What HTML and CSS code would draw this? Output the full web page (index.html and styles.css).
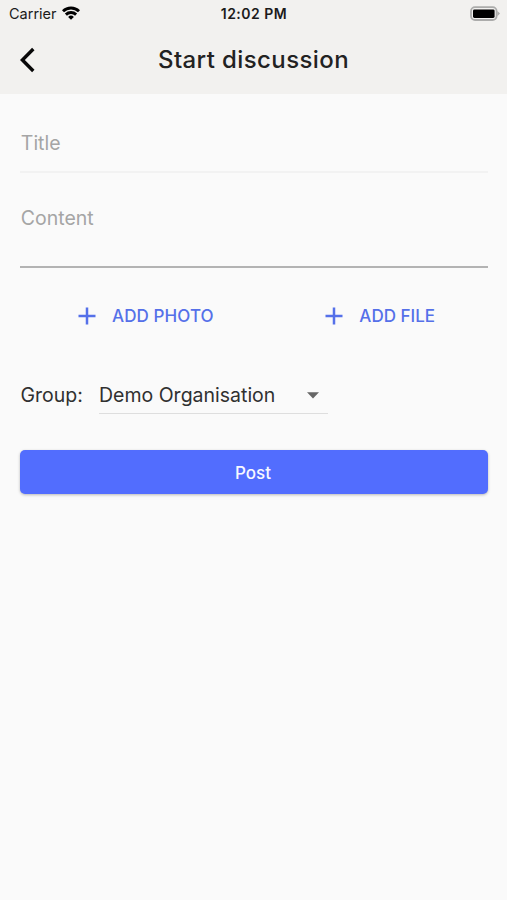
FILE: index.html
```html
<!DOCTYPE html>
<html lang="en">
<head>
<meta charset="utf-8">
<title>Start discussion</title>
<link rel="stylesheet" href="styles.css">
</head>
<body>
<header class="header">
  <div class="status">
    <div class="carrier"><span>Carrier</span>
      <svg class="wifi" width="18" height="14" viewBox="0 0 18 14"><path d="M9 13.7 6.1 10.9a4.1 4.1 0 0 1 5.8 0z"/><path class="arc" d="M1 5.2a11.5 11.5 0 0 1 16 0M3.9 8.6a7.3 7.3 0 0 1 10.2 0"/></svg>
    </div>
    <div class="time">12:02 PM</div>
    <svg class="battery" width="32" height="16" viewBox="0 0 32 16"><rect class="shell" x="2" y="1.2" width="25.6" height="12.8" rx="4"/><rect x="4" y="3.4" width="21.6" height="8.6" rx="1.4"/><path class="cap" d="M28.4 5 31 7.6 28.4 10.2z"/></svg>
  </div>
  <div class="navbar">
    <svg class="back" width="18" height="26" viewBox="0 0 18 26"><path d="M14.3 2 3.4 13l10.9 11"/></svg>
    <h1 class="heading">Start discussion</h1>
  </div>
</header>
<main class="form">
  <div class="field field-title"><span>Title</span></div>
  <div class="field field-content"><span>Content</span></div>
  <div class="attachments">
    <button class="add"><svg width="18" height="18" viewBox="0 0 18 18"><path d="M9 .5v17M.5 9h17"/></svg><span class="add-photo">ADD PHOTO</span></button>
    <button class="add"><svg width="18" height="18" viewBox="0 0 18 18"><path d="M9 .5v17M.5 9h17"/></svg><span>ADD FILE</span></button>
  </div>
  <div class="group">
    <span class="group-label">Group:</span>
    <div class="select"><span>Demo Organisation</span>
      <svg width="12" height="7" viewBox="0 0 12 7"><path d="M0 .3h12L6 6.6z"/></svg>
    </div>
  </div>
  <button class="post">Post</button>
</main>
</body>
</html>
```
FILE: styles.css
```css
* { box-sizing: border-box; }
body { margin: 0; min-height: 900px; background: #fafafa; color: #303030; font-family: Inter, sans-serif; font-size: 19.5px; line-height: 24px; }
button { border: 0; padding: 0; background: none; font: inherit; }
svg { display: block; flex: none; }
.header { height: 94px; background: #f2f1ef; }
.status { display: grid; grid-template-columns: 1fr auto 1fr; height: 27px; padding: 0 6px 0 9px; align-items: center; color: #1b1b1b; font-size: 14.5px; line-height: 20px; }
.carrier { display: flex; align-items: center; gap: 5px; }
.wifi { margin-top: -2px; }
.arc { fill: none; stroke: #000; stroke-width: 2.9; }
.time { margin-left: -2px; font-size: 14px; font-weight: 600; letter-spacing: .5px; }
.battery { justify-self: end; }
.shell { fill: #f2f1ef; stroke: #acacab; stroke-width: 1.8; }
.cap { fill: #acacab; }
.navbar { display: grid; grid-template-columns: 50px 1fr 50px; align-items: center; height: 66px; }
.back { margin-left: 19px; fill: none; stroke: #080808; stroke-width: 3.4; }
.heading { margin: 0; color: #222; font-size: 24px; font-weight: 450; line-height: 30px; letter-spacing: .4px; text-align: center; white-space: nowrap; }
.form { padding: 37px 19px 0 20px; }
.field { padding-left: .8px; color: #a5a5a5; }
.field-title { height: 42px; border-bottom: 2px solid #f2f2f2; }
.field-content { height: 63px; margin-top: 32px; padding-top: 1px; border-bottom: 2px solid #b3b3b3; }
.attachments { display: flex; justify-content: space-between; margin-top: 36px; padding: 0 53px 0 58px; }
.add { display: flex; align-items: center; gap: 16px; height: 24px; color: #5570e9; font-size: 17px; font-weight: 500; }
.add-photo { letter-spacing: .1px; }
.add svg { fill: none; stroke: currentColor; stroke-width: 2.5; }
.group { display: flex; margin-top: 55px; }
.group-label { width: 79px; padding-left: .5px; }
.select { display: flex; justify-content: space-between; width: 229px; height: 31px; padding-right: 9px; border-bottom: 1px solid #dedede; white-space: nowrap; }
.select svg { margin-top: 9px; fill: #666; }
.post { width: 100%; height: 44px; margin-top: 36px; padding: 1px 2px 0 0; border-radius: 5px; background: #526dfe; box-shadow: 0 1px 3px #0004; color: #f7f8ff; font-size: 17px; font-weight: 500; }
```
